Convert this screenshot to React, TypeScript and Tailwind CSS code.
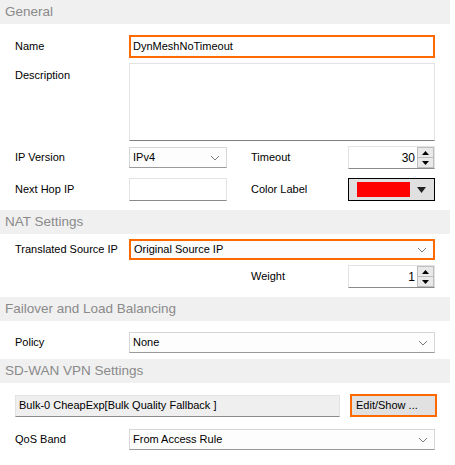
import React from 'react'

function Header({ title }: { title: string }) {
  return (
    <div className="h-[24px] w-[450px] bg-[#f0f0f0] pl-[5px] flex items-center text-[13.5px] text-[#8a8a8a]">
      {title}
    </div>
  )
}

function Chevron() {
  return (
    <svg width="10" height="6" viewBox="0 0 10 6" fill="none" className="shrink-0">
      <path d="M1 1l4 4 4-4" stroke="#7a7a7a" strokeWidth="1" />
    </svg>
  )
}

function Select({ value, width, focus }: { value: string; width: string; focus?: boolean }) {
  return (
    <div
      className={`${width} h-[21px] flex items-center justify-between pl-[3px] pr-[6px] ${
        focus
          ? 'border-2 border-[#ff6a00] bg-[#fcfcfc]'
          : 'border border-[#d6d6d6] border-b-[#9a9a9a] bg-[#fdfdfd]'
      }`}
    >
      <span>{value}</span>
      <Chevron />
    </div>
  )
}

function Spin({ value }: { value: string }) {
  return (
    <div className="w-[87px] h-[23px] flex items-center border border-[#e3e3e3] border-b-[#8a8a8a] bg-white">
      <span className="flex-1 text-right pr-[2px] text-[12px]">{value}</span>
      <div className="w-[17px] h-full flex flex-col gap-[1px] p-[1px] bg-[#bdbdbd]">
        <div className="flex-1 bg-[#e9e9e9] flex items-center justify-center">
          <svg width="7" height="4" viewBox="0 0 7 4"><path d="M0 4h7L3.5 0z" fill="#000" /></svg>
        </div>
        <div className="flex-1 bg-[#e9e9e9] flex items-center justify-center">
          <svg width="7" height="4" viewBox="0 0 7 4"><path d="M0 0h7L3.5 4z" fill="#000" /></svg>
        </div>
      </div>
    </div>
  )
}

export default function App() {
  return (
    <div className="w-[455px] h-[465px] bg-white text-black text-[11px] overflow-hidden font-['Liberation_Sans',Arial,sans-serif]">
      <Header title="General" />

      <div className="flex items-center pl-[15px] mt-[11px]">
        <span className="w-[114px]">Name</span>
        <div className="w-[306px] h-[23px] border-2 border-[#ff6a00] pl-[2px] flex items-center">
          DynMeshNoTimeout
        </div>
      </div>

      <div className="flex items-start pl-[15px] mt-[5px]">
        <span className="w-[114px] pt-[4px]">Description</span>
        <div className="w-[306px] h-[78px] border border-[#e3e3e3] border-b-[#808080] bg-white" />
      </div>

      <div className="flex items-center pl-[15px] mt-[5px]">
        <span className="w-[114px]">IP Version</span>
        <Select value="IPv4" width="w-[98px]" />
        <span className="w-[97px] ml-[24px]">Timeout</span>
        <Spin value="30" />
      </div>

      <div className="flex items-center pl-[15px] mt-[9px]">
        <span className="w-[114px]">Next Hop IP</span>
        <div className="w-[98px] h-[23px] border border-[#e3e3e3] border-b-[#8a8a8a] bg-white" />
        <span className="w-[97px] ml-[24px]">Color Label</span>
        <div className="w-[87px] h-[23px] border border-black bg-[#e0e0e0] flex items-center pl-[8px] pr-[8px] justify-between">
          <div className="w-[53px] h-[15px] bg-[#ff0000]" />
          <svg width="9" height="6" viewBox="0 0 9 6"><path d="M0 0h9L4.5 6z" fill="#222" /></svg>
        </div>
      </div>

      <div className="mt-[9px]">
        <Header title="NAT Settings" />
      </div>

      <div className="flex items-center pl-[15px] mt-[5px]">
        <span className="w-[114px]">Translated Source IP</span>
        <Select value="Original Source IP" width="w-[306px]" focus />
      </div>

      <div className="flex items-center pl-[15px] mt-[5px]">
        <span className="w-[114px]" />
        <span className="w-[98px]" />
        <span className="w-[97px] ml-[24px]">Weight</span>
        <Spin value="1" />
      </div>

      <div className="mt-[9px]">
        <Header title="Failover and Load Balancing" />
      </div>

      <div className="flex items-center pl-[15px] mt-[11px]">
        <span className="w-[114px]">Policy</span>
        <Select value="None" width="w-[306px]" />
      </div>

      <div className="mt-[6px]">
        <Header title="SD-WAN VPN Settings" />
      </div>

      <div className="flex items-center pl-[15px] mt-[11px]">
        <div className="w-[325px] h-[22px] border border-[#e3e3e3] border-b-[#8a8a8a] bg-[#efefef] pl-[3px] flex items-center">
          Bulk-0 CheapExp[Bulk Quality Fallback ]
        </div>
        <div className="ml-[10px] w-[87px] h-[23px] border-2 border-[#ff6a00] bg-[#e1e1e1] flex items-center pl-[4px]">
          Edit/Show ...
        </div>
      </div>

      <div className="flex items-center pl-[15px] mt-[12px]">
        <span className="w-[114px]">QoS Band</span>
        <Select value="From Access Rule" width="w-[306px]" />
      </div>
    </div>
  )
}
